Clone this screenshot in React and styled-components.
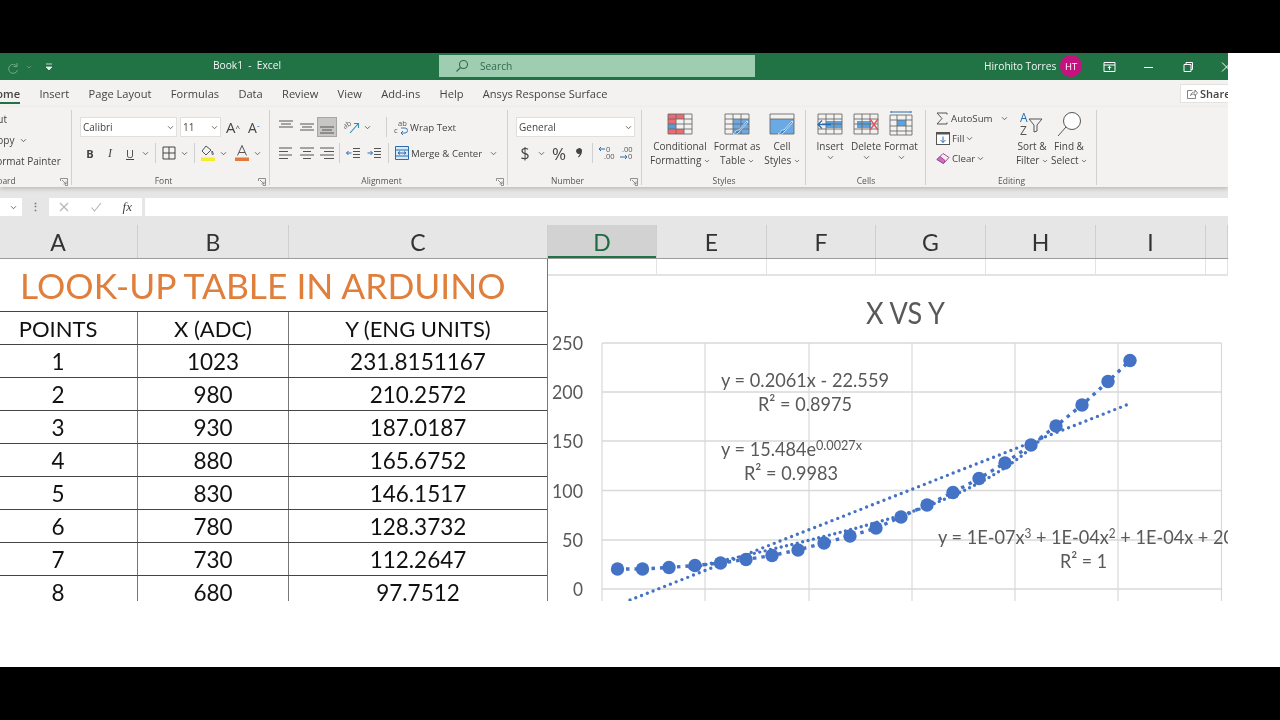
import React from 'react'
import styled, { createGlobalStyle } from 'styled-components'

const GlobalStyle = createGlobalStyle`
  html, body { margin: 0; padding: 0; background: #fff; }
  body { font-family: "Open Sans", "Liberation Sans", sans-serif; }
`

const Page = styled.div`
  width: 1280px;
  height: 720px;
  overflow: hidden;
  display: flex;
  flex-direction: column;
  background: #fff;
`
const Letterbox = styled.div`
  height: ${p => p.$h}px;
  flex: none;
  background: #000;
`
const Middle = styled.div`
  height: 614px;
  flex: none;
  background: #fff;
`
const Excel = styled.div`
  width: 1228px;
  height: 548px;
  overflow: hidden;
  display: flex;
  flex-direction: column;
  background: #e6e6e6;
  filter: blur(0.3px);
`

/* title bar */
const TitleBar = styled.div`
  height: 27px;
  flex: none;
  background: #217346;
  color: #f2f7f4;
  display: flex;
  align-items: center;
  font-size: 10.2px;
`
const Quick = styled.div`
  width: 197px;
  flex: none;
  padding-left: 6px;
  box-sizing: border-box;
  display: flex;
  align-items: center;
  gap: 6px;
`
const DocName = styled.div`
  width: 100px;
  flex: none;
  text-align: center;
  position: relative;
  top: -2px;
`
const SearchBox = styled.div`
  margin-left: 142px;
  margin-top: -2px;
  width: 316px;
  height: 22px;
  flex: none;
  background: #9fcdb1;
  color: #2f6a4b;
  display: flex;
  align-items: center;
  gap: 11px;
  padding-left: 16px;
  box-sizing: border-box;
`
const UserName = styled.div`
  margin-left: 229px;
  width: 71px;
  flex: none;
  white-space: nowrap;
  position: relative;
  top: -1px;
`
const Avatar = styled.div`
  width: 22px;
  height: 22px;
  flex: none;
  margin-left: 5px;
  margin-top: -1px;
  border-radius: 50%;
  background: #c4137f;
  color: #fff;
  font-size: 9.5px;
  display: flex;
  align-items: center;
  justify-content: center;
`
const WinButtons = styled.div`
  display: flex;
  align-items: center;
  margin-left: 21px;
  gap: 26px;
  flex: none;
`

/* tabs */
const TabRow = styled.div`
  height: 27px;
  flex: none;
  background: #f3f2f1;
  display: flex;
  align-items: center;
  justify-content: space-between;
`
const Tabs = styled.div`
  display: flex;
  gap: 19.3px;
  margin-left: -12px;
`
const Tab = styled.div`
  font-size: 11.1px;
  line-height: 15px;
  color: #444;
  white-space: nowrap;
  padding: 3px 0 1px;
  border-bottom: 2px solid ${p => (p.$active ? '#217346' : 'transparent')};
  font-weight: ${p => (p.$active ? 600 : 400)};
`
const ShareButton = styled.div`
  width: 48px;
  height: 19px;
  flex: none;
  background: #fff;
  border: 1px solid #e4e2e0;
  border-right: 0;
  box-sizing: border-box;
  display: flex;
  align-items: center;
  gap: 2px;
  padding-left: 5px;
  font-size: 11px;
  font-weight: 600;
  color: #444;
  overflow: hidden;
`

/* ribbon */
const Ribbon = styled.div`
  height: 80px;
  flex: none;
  background: #f3f2f1;
  display: flex;
  box-shadow: 0 2px 4px rgba(0, 0, 0, 0.18);
  position: relative;
  color: #444;
  font-size: 10px;
`
const Group = styled.div`
  width: ${p => p.$w}px;
  margin-left: ${p => p.$ml || 0}px;
  flex: none;
  position: relative;
  height: 78px;
  display: flex;
  flex-direction: column;
  &::after {
    content: "";
    position: absolute;
    top: 3px;
    right: 0;
    bottom: 0;
    width: 1px;
    background: #d2d0ce;
  }
`
const GroupBody = styled.div`
  flex: 1;
  min-height: 0;
  padding: ${p => p.$pad || '10px 0 0 0'};
  display: ${p => (p.$row ? 'flex' : 'block')};
`
const GroupLabel = styled.div`
  height: 14px;
  flex: none;
  line-height: 14px;
  margin-bottom: -3px;
  padding-right: ${p => (p.$launcher ? 15 : 0)}px;
  font-size: 8.5px;
  text-align: center;
  color: #555;
`
const Launcher = styled.svg`
  position: absolute;
  right: 4px;
  bottom: -1px;
  width: 8px;
  height: 8px;
`
const ToolRow = styled.div`
  height: ${p => p.$h || 20}px;
  margin-bottom: ${p => p.$mb || 0}px;
  display: flex;
  align-items: center;
  gap: ${p => p.$gap || 0}px;
  white-space: nowrap;
`
const ComboBox = styled.div`
  width: ${p => p.$w}px;
  height: 20px;
  margin-right: ${p => p.$mr || 0}px;
  flex: none;
  background: #fff;
  border: 1px solid #e1dfdd;
  box-sizing: border-box;
  display: flex;
  align-items: center;
  justify-content: space-between;
  padding: 0 2px;
  font-size: 10px;
  color: #444;
`
const Slot = styled.div`
  width: ${p => p.$w}px;
  height: 20px;
  flex: none;
  margin-left: ${p => p.$ml || 0}px;
  display: flex;
  align-items: center;
  justify-content: center;
  font-size: ${p => p.$fs || 11}px;
  font-weight: ${p => p.$fw || 400};
  font-style: ${p => (p.$it ? 'italic' : 'normal')};
  text-decoration: ${p => (p.$un ? 'underline' : 'none')};
  font-family: ${p => (p.$serif ? '"Liberation Serif", serif' : 'inherit')};
  background: ${p => (p.$on ? '#c8c6c4' : 'transparent')};
  box-shadow: ${p => (p.$on ? 'inset 0 0 0 1px #a8a6a4' : 'none')};
`
const Divider = styled.div`
  width: 1px;
  height: 20px;
  flex: none;
  background: #d2d0ce;
  margin: ${p => p.$m || '0 5px'};
`
const CmdText = styled.span`
  font-size: 9.7px;
  margin-left: ${p => p.$ml || 0}px;
`
const CaretWrap = styled.span`
  display: flex;
  margin-left: ${p => p.$ml || 0}px;
`
const BigButton = styled.div`
  width: ${p => p.$w}px;
  flex: none;
  margin-left: ${p => p.$ml || 0}px;
  margin-top: ${p => p.$mt || 0}px;
  display: flex;
  flex-direction: column;
  align-items: center;
  text-align: center;
  font-size: 10px;
  line-height: 13.5px;
  white-space: nowrap;
`
const BigIcon = styled.div`
  height: 26px;
  flex: none;
  margin-bottom: 3px;
  display: flex;
  align-items: center;
  justify-content: center;
`
const ClipLine = styled.div`
  height: 21px;
  line-height: 21px;
  font-size: 10px;
  margin-left: 55px;
  display: flex;
  align-items: center;
  gap: 6px;
`
const CmdColumn = styled.div`
  width: ${p => p.$w}px;
  flex: none;
`

/* formula bar */
const FormulaBar = styled.div`
  height: 20px;
  flex: none;
  margin-top: 10px;
  display: flex;
  align-items: center;
  background: #e6e6e6;
`
const NameBox = styled.div`
  width: 22px;
  height: 18px;
  background: #fff;
  display: flex;
  align-items: center;
  justify-content: flex-end;
  padding-right: 5px;
  box-sizing: border-box;
`
const Grip = styled.div`
  width: 27px;
  text-align: center;
  color: #777;
  font-size: 11px;
  font-weight: 700;
  line-height: 18px;
`
const FxBox = styled.div`
  width: 93px;
  height: 18px;
  background: #fff;
  display: flex;
  align-items: center;
  justify-content: space-between;
  padding: 0 10px 0 9px;
  box-sizing: border-box;
  color: #555;
`
const FxSign = styled.span`
  font-family: "Liberation Serif", serif;
  font-style: italic;
  font-size: 13px;
  color: #444;
`
const FormulaInput = styled.div`
  flex: 1;
  height: 18px;
  margin-left: 3px;
  background: #fff;
`

/* sheet */
const ColumnHeaders = styled.div`
  height: 33px;
  flex: none;
  margin-top: 8px;
  margin-left: -21px;
  display: flex;
  background: #e6e6e6;
  border-bottom: 1px solid #9c9c9c;
`
const ColHead = styled.div`
  width: ${p => p.$w}px;
  flex: none;
  box-sizing: border-box;
  display: flex;
  align-items: center;
  justify-content: center;
  font-family: Lato, "Liberation Sans", sans-serif;
  font-size: 23px;
  color: ${p => (p.$sel ? '#1e6b43' : '#333')};
  background: ${p => (p.$sel ? '#d2d2d2' : 'transparent')};
  border-right: 1px solid #cfcfcf;
  box-shadow: ${p => (p.$sel ? 'inset 0 -2px 0 #217346' : 'none')};
`
const Sheet = styled.div`
  flex: 1;
  min-height: 0;
  display: flex;
  background: #fff;
  margin-left: -21px;
`
const DataTable = styled.div`
  width: 569px;
  flex: none;
  border-right: 1px solid #777;
  box-sizing: border-box;
  font-family: Lato, "Liberation Sans", sans-serif;
  color: #111;
`
const TitleCell = styled.div`
  height: 53px;
  box-sizing: border-box;
  border-bottom: 1px solid #444;
  padding-left: 41px;
  display: flex;
  align-items: center;
  font-size: 35.4px;
  color: #e07f3c;
  white-space: nowrap;
`
const Row = styled.div`
  height: 33px;
  box-sizing: border-box;
  border-bottom: 1px solid #444;
  display: grid;
  grid-template-columns: 159px 151px 258px;
`
const Cell = styled.div`
  display: flex;
  align-items: center;
  justify-content: center;
  font-size: ${p => (p.$head ? 22 : 22.5)}px;
  border-right: 1px solid #777;
  white-space: nowrap;
  &:last-child { border-right: 0; }
`
const RightSide = styled.div`
  flex: 1;
  display: flex;
  flex-direction: column;
  min-width: 0;
`
const EmptyCells = styled.div`
  height: 17px;
  flex: none;
  display: flex;
  border-bottom: 2px solid #e3e3e3;
  box-sizing: border-box;
`
const EmptyCell = styled.div`
  width: ${p => p.$w}px;
  flex: none;
  box-sizing: border-box;
  border-right: 1px solid #e3e3e3;
`
const ChartSvg = styled.svg`
  display: block;
  flex: none;
`

const Caret = ({ size = 7, color = '#555' }) => (
  <svg width={size} height={size} viewBox="0 0 8 8" style={{ flex: 'none' }}>
    <path d="M1.2 2.6 4 5.4l2.8-2.8" fill="none" stroke={color} strokeWidth="1" />
  </svg>
)

const LauncherIcon = () => (
  <Launcher viewBox="0 0 8 8">
    <path d="M.5 3V.5H7.500V7.500H5M2 2l4 4M6 3.500V6H3.500" fill="none" stroke="#777" strokeWidth=".8" />
  </Launcher>
)

const Lines = ({ kind }) => {
  const widths = {
    alignLeft: [[2, 15], [2, 11], [2, 15], [2, 11]],
    alignCenter: [[2, 16], [5, 13], [2, 16], [5, 13]],
    alignRight: [[2, 16], [6, 16], [2, 16], [6, 16]],
  }[kind]
  const ys = [4, 7.500, 11, 14.500]
  return (
    <svg width="18" height="18" viewBox="0 0 18 18">
      {widths.map((w, i) => (
        <line key={i} x1={w[0]} x2={w[1]} y1={ys[i]} y2={ys[i]} stroke="#555" strokeWidth="1" />
      ))}
    </svg>
  )
}

const VAlign = ({ pos }) => {
  const start = pos === 'top' ? 3 : pos === 'mid' ? 6 : 9
  return (
    <svg width="18" height="18" viewBox="0 0 18 18">
      <line x1="2" x2="16" y1={start} y2={start} stroke="#555" />
      <line x1="4" x2="14" y1={start + 3} y2={start + 3} stroke="#555" />
      <line x1="2" x2="16" y1={start + 6} y2={start + 6} stroke="#555" />
    </svg>
  )
}

const IndentIcon = ({ dir }) => (
  <svg width="16" height="16" viewBox="0 0 16 16">
    <path d="M8 3.500h7M8 6.500h7M8 9.500h7M8 12.500h7" stroke="#555" fill="none" />
    {dir === 'left' ? (
      <path d="M6.500 8H1.500M3.500 6l-2 2 2 2" stroke="#2b6cb0" fill="none" />
    ) : (
      <path d="M1.500 8H6.500M4.500 6l2 2-2 2" stroke="#2b6cb0" fill="none" />
    )}
  </svg>
)

const GridBig = ({ children, w = 26, h = 22 }) => (
  <svg width={w} height={h} viewBox="0 0 26 22">
    {children}
  </svg>
)

const gridLines = (
  <path
    d="M1 1h24v20H1zM1 6h24M1 11h24M1 16h24M9 1v20M17 1v20"
    fill="none"
    stroke="#6b6b6b"
    strokeWidth=".9"
  />
)

const Brush = () => (
  <path d="M24 9 15 19c-1 2-4 3-6 2 2-.5 2-2 3-3 1-1 2-1 3-1l8-9z" fill="#3f7fc4" stroke="#fff" strokeWidth=".7" />
)

const series = [
  [617.5, 569], [642.5, 569], [669, 567.5], [695, 565.5], [720.5, 563], [746, 559.5], [772, 555.5],
  [798, 550], [824, 543], [850, 536], [876, 528], [901, 517], [927, 505], [953, 492.5],
  [979, 478.5], [1005, 463], [1031, 445], [1056, 426], [1082, 405], [1108, 381.5], [1130, 360.5],
]
const seriesPoints = series.map(p => p.join(',')).join(' ')

const axisTicks = [
  ['250', 343, 31], ['200', 392, 31], ['150', 441, 31], ['100', 490.5, 31], ['50', 540, 21], ['0', 589, 10],
]
const hLines = [343, 392, 441, 490.5, 540, 589]
const vLines = [602, 705, 809, 912, 1015, 1118, 1221.5]

const ChartText = ({ x, y, len, size = 20, children }) => (
  <text
    x={x}
    y={y}
    fontFamily="Lato, 'Liberation Sans', sans-serif"
    fontSize={size}
    fill="#595959"
    textLength={len}
    lengthAdjust={len ? 'spacingAndGlyphs' : undefined}
  >
    {children}
  </text>
)

const Chart = () => (
  <ChartSvg width="680" height="325" viewBox="548 276 680 325">
    <rect x="548" y="276" width="680" height="325" fill="#fff" />
    {hLines.map(y => (
      <line key={y} x1="602" x2="1221.500" y1={y} y2={y} stroke="#d9d9d9" strokeWidth="1.400" />
    ))}
    {vLines.map(x => (
      <line key={x} x1={x} x2={x} y1="343" y2="601" stroke="#d9d9d9" strokeWidth="1.200" />
    ))}
    <ChartText x="866" y="324" size="30" len="79">X VS Y</ChartText>
    {axisTicks.map(([t, y, w]) => (
      <ChartText key={t} x={583 - w} y={y + 7} len={w}>{t}</ChartText>
    ))}

    <line x1="630" y1="600" x2="1129" y2="404" stroke="#4472c4" strokeWidth="3.400" strokeDasharray="0 6.200" strokeLinecap="round" />
    <path d="M690 568 C 780 548 880 524 925 507 C 965 492 1010 470 1042 438" fill="none" stroke="#4472c4" strokeWidth="3.400" strokeDasharray="0 5.500" strokeLinecap="round" />
    <polyline points={seriesPoints} fill="none" stroke="#4472c4" strokeWidth="3.400" strokeDasharray="3.500 5" />
    {series.map(([x, y]) => (
      <circle key={x} cx={x} cy={y} r="6.700" fill="#4472c4" />
    ))}

    <ChartText x="721" y="387" len="168">y = 0.2061x - 22.559</ChartText>
    <ChartText x="758" y="411" len="94">R² = 0.8975</ChartText>
    <ChartText x="721" y="456" len="141">
      y = 15.484e<tspan dy="-6" fontSize="14">0.0027x</tspan>
    </ChartText>
    <ChartText x="744" y="480" len="94">R² = 0.9983</ChartText>
    <ChartText x="938" y="544" len="296">
      y = 1E-07x<tspan dy="-6" fontSize="13">3</tspan>
      <tspan dy="6"> + 1E-04x</tspan>
      <tspan dy="-6" fontSize="13">2</tspan>
      <tspan dy="6"> + 1E-04x + 20</tspan>
    </ChartText>
    <ChartText x="1060" y="568" len="47">R² = 1</ChartText>
  </ChartSvg>
)

const rows = [
  ['1', '1023', '231.8151167'],
  ['2', '980', '210.2572'],
  ['3', '930', '187.0187'],
  ['4', '880', '165.6752'],
  ['5', '830', '146.1517'],
  ['6', '780', '128.3732'],
  ['7', '730', '112.2647'],
  ['8', '680', '97.7512'],
]

const columns = [
  ['A', 159], ['B', 151], ['C', 259], ['D', 109, true], ['E', 110], ['F', 109],
  ['G', 110], ['H', 110], ['I', 110], ['', 22],
]

export default function App() {
  return (
    <Page>
      <GlobalStyle />
      <Letterbox $h={53} />
      <Middle>
        <Excel>
          <TitleBar>
            <Quick>
              <svg width="14" height="14" viewBox="0 0 14 14">
                <path d="M11 3v3.500H7.500M11 6.500A4.500 4.500 0 1 0 11.500 10" fill="none" stroke="#6fa98a" strokeWidth="1" />
              </svg>
              <Caret size={6} color="#6fa98a" />
              <svg width="10" height="10" viewBox="0 0 10 10" style={{ marginLeft: 6 }}>
                <path d="M2 2h6M2 5h6L5 8z" fill="#e6f0ea" stroke="#e6f0ea" strokeWidth=".8" />
              </svg>
            </Quick>
            <DocName>Book1 &nbsp;-&nbsp; Excel</DocName>
            <SearchBox>
              <svg width="14" height="14" viewBox="0 0 14 14">
                <circle cx="8.500" cy="5.500" r="4" fill="none" stroke="#2f6a4b" strokeWidth="1.100" />
                <path d="M5.500 8.500 1.500 12.500" stroke="#2f6a4b" strokeWidth="1.100" />
              </svg>
              Search
            </SearchBox>
            <UserName>Hirohito Torres</UserName>
            <Avatar>HT</Avatar>
            <WinButtons>
              <svg width="13" height="12" viewBox="0 0 13 12">
                <path d="M1 1.500h11v9H1zM1 4h11M6.500 9V5.500M4.800 7l1.700-1.700L8.200 7" fill="none" stroke="#fff" />
              </svg>
              <svg width="13" height="12" viewBox="0 0 13 12">
                <path d="M2 6.500h9" stroke="#fff" />
              </svg>
              <svg width="13" height="12" viewBox="0 0 13 12">
                <path d="M3 3.500h7v7H3zM5 3.500V1.500h6.500v7H10" fill="none" stroke="#fff" />
              </svg>
              <svg width="13" height="12" viewBox="0 0 13 12">
                <path d="M2 1.500 11 10.500M11 1.500 2 10.500" fill="none" stroke="#fff" />
              </svg>
            </WinButtons>
          </TitleBar>

          <TabRow>
            <Tabs>
              <Tab $active>Home</Tab>
              <Tab>Insert</Tab>
              <Tab>Page Layout</Tab>
              <Tab>Formulas</Tab>
              <Tab>Data</Tab>
              <Tab>Review</Tab>
              <Tab>View</Tab>
              <Tab>Add-ins</Tab>
              <Tab>Help</Tab>
              <Tab>Ansys Response Surface</Tab>
            </Tabs>
            <ShareButton>
              <svg width="12" height="12" viewBox="0 0 12 12" style={{ flex: 'none' }}>
                <path d="M6.500 2.500h-5v8h8V7M4.500 7.500C5 5 7 4 9 4V2l2.500 3L9 7.500V6C7 6 5.500 6.300 4.500 7.500z" fill="none" stroke="#666" strokeWidth=".8" />
              </svg>
              Share
            </ShareButton>
          </TabRow>

          <Ribbon>
            <Group $w={136} $ml={-64}>
              <GroupBody $pad="2px 0 0 0">
                <ClipLine>Cut</ClipLine>
                <ClipLine>Copy <Caret /></ClipLine>
                <ClipLine>Format Painter</ClipLine>
              </GroupBody>
              <GroupLabel $launcher>Clipboard</GroupLabel>
              <LauncherIcon />
            </Group>

            <Group $w={198}>
              <GroupBody $pad="10px 0 0 8px">
                <ToolRow $mb={6}>
                  <ComboBox $w={97} $mr={3}>Calibri <Caret /></ComboBox>
                  <ComboBox $w={41}>11 <Caret /></ComboBox>
                  <Slot $w={24} $fs={15}>A<sup style={{ fontSize: 8 }}>^</sup></Slot>
                  <Slot $w={18} $fs={14}>A<sup style={{ fontSize: 8, color: '#2b6cb0' }}>ˇ</sup></Slot>
                </ToolRow>
                <ToolRow>
                  <Slot $w={20} $fw={700}>B</Slot>
                  <Slot $w={20} $it $serif $fs={12}>I</Slot>
                  <Slot $w={20} $un>U</Slot>
                  <Slot $w={10}><Caret /></Slot>
                  <Divider $m="0 5px 0 5px" />
                  <Slot $w={16}>
                    <svg width="14" height="14" viewBox="0 0 14 14">
                      <path d="M1 1h12v12H1zM7 1v12M1 7h12" fill="none" stroke="#444" />
                    </svg>
                  </Slot>
                  <Slot $w={14}><Caret /></Slot>
                  <Divider $m="0 4px 0 3px" />
                  <Slot $w={18}>
                    <svg width="16" height="18" viewBox="0 0 16 18">
                      <path d="M6 2 2 7l4 4 5-5zM12 7c1 2 2 3 .8 3.800C11.800 10.800 12 8.500 12 7z" fill="none" stroke="#555" />
                      <rect x="1" y="13.500" width="14" height="3.500" fill="#f4ee2a" />
                    </svg>
                  </Slot>
                  <Slot $w={13}><Caret /></Slot>
                  <Slot $w={18} $ml={3}>
                    <svg width="16" height="18" viewBox="0 0 16 18">
                      <path d="M3.500 11.500 8 1.500l4.500 10M5 8.500h6" fill="none" stroke="#555" />
                      <rect x="1" y="13.500" width="14" height="3.500" fill="#e0793c" />
                    </svg>
                  </Slot>
                  <Slot $w={12}><Caret /></Slot>
                </ToolRow>
              </GroupBody>
              <GroupLabel $launcher>Font</GroupLabel>
              <LauncherIcon />
            </Group>

            <Group $w={238}>
              <GroupBody $pad="10px 0 0 6px">
                <ToolRow $mb={6}>
                  <Slot $w={20}><VAlign pos="top" /></Slot>
                  <Slot $w={21}><VAlign pos="mid" /></Slot>
                  <Slot $w={20} $on><VAlign pos="bot" /></Slot>
                  <Slot $w={22} $ml={4}>
                    <svg width="17" height="16" viewBox="0 0 17 16">
                      <text x="0" y="8" fontSize="7.500" fill="#666" transform="rotate(-35 4 8)">ab</text>
                      <path d="M6 14 14 5M10 4.500H14.500V9" fill="none" stroke="#2b8fb0" strokeWidth="1.100" />
                    </svg>
                  </Slot>
                  <Slot $w={8}><Caret /></Slot>
                  <Divider $m="0 7px 0 15px" />
                  <svg width="15" height="16" viewBox="0 0 15 16" style={{ flex: 'none' }}>
                    <text x="4" y="7" fontSize="7.500" fill="#555">ab</text>
                    <text x="0" y="14" fontSize="7.500" fill="#555">c</text>
                    <path d="M7 9h4a2.500 2.500 0 0 1 0 5H7M9 12l-2 2 2 2" fill="none" stroke="#2b6cb0" strokeWidth=".9" />
                  </svg>
                  <CmdText $ml={1}>Wrap Text</CmdText>
                </ToolRow>
                <ToolRow>
                  <Slot $w={20}><Lines kind="alignLeft" /></Slot>
                  <Slot $w={21}><Lines kind="alignCenter" /></Slot>
                  <Slot $w={20}><Lines kind="alignRight" /></Slot>
                  <Divider $m="0 3px 0 2px" />
                  <Slot $w={20}><IndentIcon dir="left" /></Slot>
                  <Slot $w={21}><IndentIcon dir="right" /></Slot>
                  <Divider $m="0 6px 0 4px" />
                  <svg width="14" height="14" viewBox="0 0 14 14" style={{ flex: 'none' }}>
                    <path d="M.5.500h13v13H.5zM.5 4h13M.5 10h13" fill="#dbeaf7" stroke="#2b6cb0" />
                    <path d="M3 7h8M5 5.500 3 7l2 1.500M9 5.500 11 7 9 8.500" fill="none" stroke="#2b6cb0" />
                  </svg>
                  <CmdText $ml={2}>Merge &amp; Center</CmdText>
                  <CaretWrap $ml={8}><Caret /></CaretWrap>
                </ToolRow>
              </GroupBody>
              <GroupLabel $launcher>Alignment</GroupLabel>
              <LauncherIcon />
            </Group>

            <Group $w={134}>
              <GroupBody $pad="10px 0 0 8px">
                <ToolRow $mb={6}>
                  <ComboBox $w={119}>General <Caret /></ComboBox>
                </ToolRow>
                <ToolRow>
                  <Slot $w={18} $fs={16}>$</Slot>
                  <Slot $w={14}><Caret /></Slot>
                  <Slot $w={22} $fs={17}>%</Slot>
                  <Slot $w={20}>
                    <svg width="8" height="12" viewBox="0 0 8 12">
                      <path d="M2 1.500a2.600 2.600 0 0 1 4 2.500c0 3-1.500 5-3.500 6.500L2 9.800C3 8.800 3.600 8 3.800 6.800A2.700 2.700 0 0 1 2 1.500z" fill="#444" />
                    </svg>
                  </Slot>
                  <Divider $m="0 4px 0 2px" />
                  <Slot $w={20}>
                    <svg width="18" height="16" viewBox="0 0 18 16">
                      <text x="8" y="7" fontSize="7.500" fill="#555">0</text>
                      <text x="6" y="14" fontSize="7.500" fill="#555">.00</text>
                      <path d="M1 4h6M3 2 1 4l2 2" fill="none" stroke="#2b6cb0" />
                    </svg>
                  </Slot>
                  <Slot $w={20}>
                    <svg width="18" height="16" viewBox="0 0 18 16">
                      <text x="4" y="7" fontSize="7.500" fill="#555">.00</text>
                      <text x="10" y="14" fontSize="7.500" fill="#555">0</text>
                      <path d="M2 12h7M7 10l2 2-2 2" fill="none" stroke="#2b6cb0" />
                    </svg>
                  </Slot>
                </ToolRow>
              </GroupBody>
              <GroupLabel $launcher>Number</GroupLabel>
              <LauncherIcon />
            </Group>

            <Group $w={164}>
              <GroupBody $row $pad="4px 0 0 5px">
                <BigButton $w={66}>
                  <BigIcon>
                    <GridBig>
                      <rect x="1" y="1" width="16" height="5" fill="#ec6a70" />
                      <rect x="1" y="6" width="8" height="5" fill="#ec6a70" />
                      <rect x="1" y="11" width="8" height="5" fill="#5b9bd5" />
                      <rect x="1" y="16" width="16" height="5" fill="#ec6a70" />
                      {gridLines}
                    </GridBig>
                  </BigIcon>
                  Conditional
                  <span>Formatting <Caret size={6} /></span>
                </BigButton>
                <BigButton $w={48}>
                  <BigIcon>
                    <GridBig>
                      <rect x="9" y="6" width="16" height="15" fill="#6aa9e4" />
                      {gridLines}
                      <Brush />
                    </GridBig>
                  </BigIcon>
                  Format as
                  <span>Table <Caret size={6} /></span>
                </BigButton>
                <BigButton $w={42}>
                  <BigIcon>
                    <GridBig>
                      <rect x="1" y="6" width="24" height="15" fill="#6aa9e4" />
                      <path d="M1 1h24v20H1zM1 6h24" fill="none" stroke="#6b6b6b" strokeWidth=".9" />
                      <Brush />
                    </GridBig>
                  </BigIcon>
                  Cell
                  <span>Styles <Caret size={6} /></span>
                </BigButton>
              </GroupBody>
              <GroupLabel>Styles</GroupLabel>
            </Group>

            <Group $w={120}>
              <GroupBody $row $pad="4px 0 0 6px">
                <BigButton $w={36}>
                  <BigIcon>
                    <GridBig>
                      <rect x="9" y="8" width="16" height="7" fill="#5ba3e0" />
                      {gridLines}
                      <path d="M14 11.500H1M5 7.500l-4 4 4 4" fill="#fff" stroke="#2b6cb0" strokeWidth="1.300" />
                    </GridBig>
                  </BigIcon>
                  Insert
                  <Caret />
                </BigButton>
                <BigButton $w={36}>
                  <BigIcon>
                    <GridBig>
                      <rect x="4" y="8" width="14" height="7" fill="#5ba3e0" />
                      {gridLines}
                      <path d="M17 6 25 17M25 6 17 17" stroke="#e0565b" strokeWidth="1.400" />
                    </GridBig>
                  </BigIcon>
                  Delete
                  <Caret />
                </BigButton>
                <BigButton $w={34}>
                  <BigIcon>
                    <svg width="26" height="26" viewBox="0 0 26 26">
                      <path d="M3 1h20M3 0v2M23 0v2" stroke="#2b6cb0" />
                      <rect x="9" y="9" width="9" height="6" fill="#5ba3e0" />
                      <path d="M2 4h22v20H2zM2 9h22M2 15h22M2 20h22M9 4v20M18 4v20" fill="none" stroke="#6b6b6b" strokeWidth=".9" />
                    </svg>
                  </BigIcon>
                  Format
                  <Caret />
                </BigButton>
              </GroupBody>
              <GroupLabel>Cells</GroupLabel>
            </Group>

            <Group $w={171}>
              <GroupBody $row $pad="1px 0 0 10px">
                <CmdColumn $w={87}>
                  <ToolRow $h={20}>
                    <svg width="12" height="13" viewBox="0 0 12 13" style={{ flex: 'none' }}>
                      <path d="M11 2.500V1H1l5 5.500L1 12h10v-1.500" fill="none" stroke="#555" />
                    </svg>
                    <CmdText $ml={3}>AutoSum</CmdText>
                    <CaretWrap $ml={8}><Caret /></CaretWrap>
                  </ToolRow>
                  <ToolRow $h={20}>
                    <svg width="14" height="13" viewBox="0 0 14 13" style={{ flex: 'none' }}>
                      <rect x=".5" y=".5" width="13" height="12" fill="#fff" stroke="#555" />
                      <path d="M.5.500h13v2H.5z" fill="#555" />
                      <path d="M7 4.500v6M4.500 8 7 10.500 9.500 8" fill="none" stroke="#2b6cb0" />
                    </svg>
                    <CmdText $ml={2}>Fill</CmdText>
                    <CaretWrap $ml={2}><Caret /></CaretWrap>
                  </ToolRow>
                  <ToolRow $h={20}>
                    <svg width="14" height="13" viewBox="0 0 14 13" style={{ flex: 'none' }}>
                      <path d="M1 7.500 7 1.500l6 4-5.500 6z" fill="#f3f2f1" stroke="#a6449c" />
                      <path d="M1 7.500 4 4.500l5 4-1.500 3z" fill="#c774bd" stroke="#a6449c" />
                    </svg>
                    <CmdText $ml={2}>Clear</CmdText>
                    <CaretWrap $ml={2}><Caret /></CaretWrap>
                  </ToolRow>
                </CmdColumn>
                <BigButton $w={38} $ml={-10} $mt={3}>
                  <BigIcon>
                    <svg width="26" height="26" viewBox="0 0 26 26">
                      <text x="1" y="11" fontSize="12" fill="#2b6cb0">A</text>
                      <text x="1" y="24" fontSize="12" fill="#555">Z</text>
                      <path d="M10 8h13l-5 6v6l-3 1v-7z" fill="none" stroke="#555" />
                    </svg>
                  </BigIcon>
                  Sort &amp;
                  <span>Filter <Caret size={6} /></span>
                </BigButton>
                <BigButton $w={36} $mt={3}>
                  <BigIcon>
                    <svg width="28" height="26" viewBox="0 0 28 26">
                      <circle cx="17" cy="10" r="8.500" fill="#fff" stroke="#555" />
                      <path d="M11 16 3 25" stroke="#555" />
                    </svg>
                  </BigIcon>
                  Find &amp;
                  <span>Select <Caret size={6} /></span>
                </BigButton>
              </GroupBody>
              <GroupLabel>Editing</GroupLabel>
            </Group>
          </Ribbon>

          <FormulaBar>
            <NameBox><Caret /></NameBox>
            <Grip>⋮</Grip>
            <FxBox>
              <svg width="12" height="12" viewBox="0 0 12 12">
                <path d="M2 2 10 10M10 2 2 10" stroke="#b5b5b5" strokeWidth="1.100" />
              </svg>
              <svg width="12" height="12" viewBox="0 0 12 12">
                <path d="M1.500 6.500 4.500 10 11 2" fill="none" stroke="#b5b5b5" strokeWidth="1.100" />
              </svg>
              <FxSign>fx</FxSign>
            </FxBox>
            <FormulaInput />
          </FormulaBar>

          <ColumnHeaders>
            {columns.map(([label, w, sel]) => (
              <ColHead key={label + w} $w={w} $sel={sel}>{label}</ColHead>
            ))}
          </ColumnHeaders>

          <Sheet>
            <DataTable>
              <TitleCell>LOOK-UP TABLE IN ARDUINO</TitleCell>
              <Row>
                <Cell $head>POINTS</Cell>
                <Cell $head>X (ADC)</Cell>
                <Cell $head>Y (ENG UNITS)</Cell>
              </Row>
              {rows.map(r => (
                <Row key={r[0]}>
                  <Cell>{r[0]}</Cell>
                  <Cell>{r[1]}</Cell>
                  <Cell>{r[2]}</Cell>
                </Row>
              ))}
            </DataTable>
            <RightSide>
              <EmptyCells>
                {columns.slice(3).map(([label, w]) => (
                  <EmptyCell key={label + w} $w={w} />
                ))}
              </EmptyCells>
              <Chart />
            </RightSide>
          </Sheet>
        </Excel>
      </Middle>
      <Letterbox $h={53} />
    </Page>
  )
}
